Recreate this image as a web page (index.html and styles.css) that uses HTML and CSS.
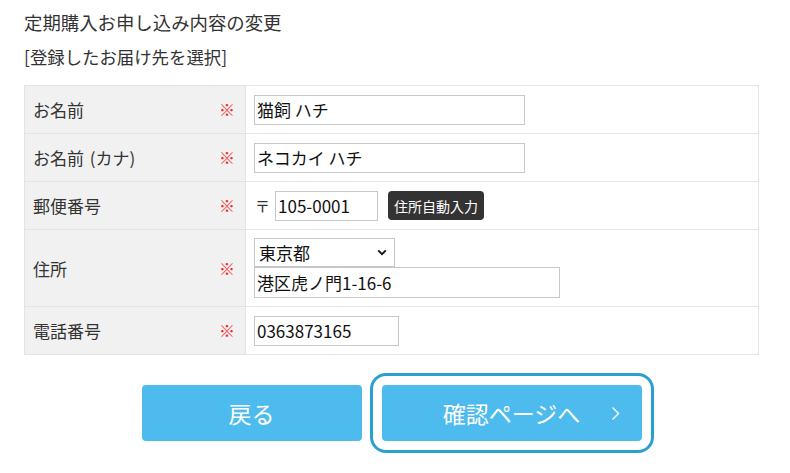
FILE: index.html
```html
<!DOCTYPE html>
<html lang="ja">
<head>
<meta charset="utf-8">
<title>定期購入お申し込み内容の変更</title>
<link rel="stylesheet" href="styles.css">
</head>
<body>
<div class="page">
  <h1 class="title">定期購入お申し込み内容の変更</h1>
  <p class="subtitle">[登録したお届け先を選択]</p>
  <table class="form">
    <tr class="row">
      <th class="label"><span class="label-text">お名前</span><span class="req">※</span></th>
      <td class="value"><input class="field field-name" type="text" value="猫飼 ハチ"></td>
    </tr>
    <tr class="row">
      <th class="label"><span class="label-text">お名前&nbsp;(カナ)</span><span class="req">※</span></th>
      <td class="value"><input class="field field-name" type="text" value="ネコカイ ハチ"></td>
    </tr>
    <tr class="row">
      <th class="label"><span class="label-text">郵便番号</span><span class="req">※</span></th>
      <td class="value">
        <div class="zip-line">
          <span class="zip-mark">〒</span>
          <input class="field field-zip" type="text" value="105-0001">
          <button class="auto-btn" type="button">住所自動入力</button>
        </div>
      </td>
    </tr>
    <tr class="row row-address">
      <th class="label"><span class="label-text">住所</span><span class="req">※</span></th>
      <td class="value">
        <div class="select-wrap">
          <select class="field field-pref"><option>東京都</option></select>
          <svg class="select-arrow" width="10" height="7" viewBox="0 0 10 7"><path d="M1.2 1.4 L5 5.2 L8.8 1.4" fill="none" stroke="#111" stroke-width="1.8"/></svg>
        </div>
        <input class="field field-addr" type="text" value="港区虎ノ門1-16-6">
      </td>
    </tr>
    <tr class="row">
      <th class="label"><span class="label-text">電話番号</span><span class="req">※</span></th>
      <td class="value"><input class="field field-tel" type="text" value="0363873165"></td>
    </tr>
  </table>
  <div class="actions">
    <button class="btn btn-back" type="button">戻る</button>
    <button class="btn btn-next" type="button">確認ページへ<svg class="chev" width="9" height="15" viewBox="0 0 9 15"><path d="M1.5 1.5 L7.5 7.5 L1.5 13.5" fill="none" stroke="#fff" stroke-width="1.4"/></svg></button>
  </div>
</div>
</body>
</html>
```

FILE: styles.css
```css
* { box-sizing: border-box; }
html, body { margin: 0; padding: 0; background: #fff; }
body {
  font-family: "Noto Sans CJK JP", "Noto Sans", sans-serif;
  color: #333;
  min-height: 473px;
}
.page {
  padding: 8px 0 32px 24px;
  width: 759px;
}
.title {
  margin: 0;
  font-size: 18.4px;
  font-weight: 400;
  line-height: 28px;
}
.subtitle {
  margin: 7px 0 0;
  font-size: 17.4px;
  line-height: 28px;
}
.form {
  margin-top: 14px;
  width: 735px;
  border-collapse: collapse;
  border: 1px solid #e4e4e4;
}
.row { height: 48px; }
.row-address { height: 77px; }
.label {
  width: 221px;
  background: #f1f1f1;
  border: 1px solid #e4e4e4;
  padding: 0 10px 0 8px;
  font-size: 17px;
  font-weight: 400;
  text-align: left;
  vertical-align: middle;
}
.label-text { float: left; word-spacing: 2px; }
.req { float: right; color: #f52a2a; font-size: 16px; }
.value {
  border: 1px solid #e4e4e4;
  padding: 0 8px;
  vertical-align: middle;
}
.field {
  display: block;
  height: 30px;
  border: 1px solid #c8c8c8;
  border-radius: 0;
  padding: 0 2px;
  font-family: "Noto Sans CJK JP", "Noto Sans", sans-serif;
  font-size: 17px;
  color: #111;
  background: #fff;
  margin: 0;
}
.field-name { width: 271px; }
.zip-line { display: flex; align-items: center; }
.zip-mark { font-size: 15px; color: #333; margin: 0 5px 0 1px; }
.field-zip { width: 103px; }
.auto-btn {
  margin-left: 10px;
  width: 96px;
  height: 29px;
  background: #333;
  color: #fff;
  border: none;
  border-radius: 4px;
  font-family: "Noto Sans CJK JP", "Noto Sans", sans-serif;
  font-size: 14px;
  padding: 0;
}
.select-wrap { position: relative; width: 141px; }
.field-pref {
  width: 141px;
  height: 29px;
  appearance: none;
  -webkit-appearance: none;
  padding-left: 4px;
}
.select-arrow { position: absolute; right: 8px; top: 11px; }
.field-addr { width: 306px; height: 31px; margin-top: 0; }
.field-tel { width: 145px; }
.actions {
  width: 735px;
  margin-top: 30px;
  display: flex;
  justify-content: center;
  gap: 20px;
}
.btn {
  height: 56px;
  border: none;
  border-radius: 4px;
  background: #4dbbee;
  color: #fff;
  font-family: "Noto Sans CJK JP", "Noto Sans", sans-serif;
  font-size: 23px;
  font-weight: 400;
  padding: 0;
}
.btn-back { width: 220px; }
.btn-next {
  width: 260px;
  position: relative;
  outline: 3px solid #2a9fd3;
  outline-offset: 9px;
}
.chev { position: absolute; right: 22px; top: 21px; }
```
